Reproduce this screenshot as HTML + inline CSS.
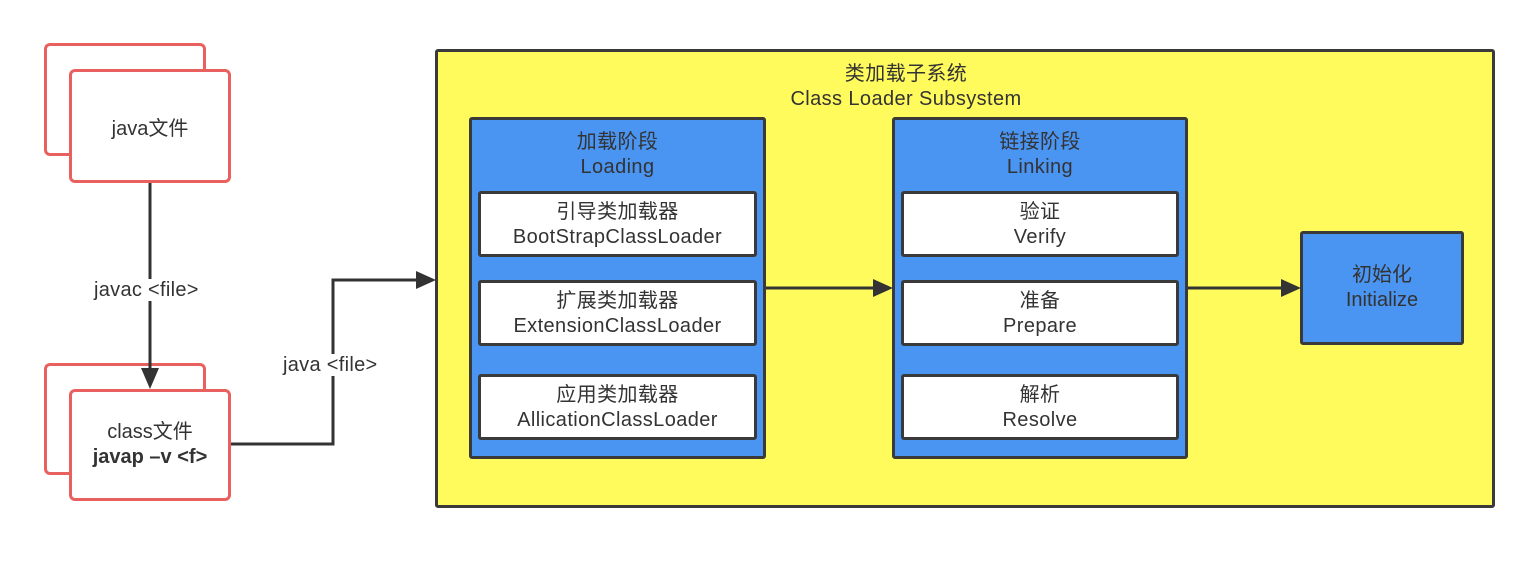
<!DOCTYPE html>
<html><head><meta charset="utf-8"><style>
body{margin:0;width:1538px;height:580px;background:#fff;position:relative;overflow:hidden;font-family:"Liberation Sans","Noto Sans CJK SC",sans-serif;color:#333;}
.a{position:absolute;box-sizing:border-box;}
.red{border:3px solid #e8615e;border-radius:6px;background:#fff;}
.dk{border:3px solid #3a3a3a;border-radius:3px;}
.t{position:absolute;text-align:center;font-size:20px;line-height:25px;letter-spacing:0.4px;}
.w{background:#fff;display:flex;flex-direction:column;justify-content:center;align-items:center;text-align:center;font-size:20px;line-height:25px;letter-spacing:0.4px;padding-top:1px;}
.lbl{position:absolute;background:#fff;font-size:20px;line-height:22px;padding:0 2px;z-index:6;letter-spacing:0.3px;}
</style></head><body>
<div class="a red" style="left:44px;top:43px;width:162px;height:113px"></div>
<div class="a red" style="left:69px;top:69px;width:162px;height:114px;display:flex;align-items:center;justify-content:center;font-size:20px">java文件</div>
<div class="a red" style="left:44px;top:363px;width:162px;height:112px"></div>
<div class="a red" style="left:69px;top:389px;width:162px;height:112px;display:flex;flex-direction:column;align-items:center;justify-content:center;font-size:20px;line-height:25px"><div>class文件</div><div style="font-weight:bold">javap –v &lt;f&gt;</div></div>

<div class="a dk" style="left:435px;top:49px;width:1060px;height:459px;background:#fffb5c;"></div>
<div class="t" style="left:436px;width:940px;top:62px">类加载子系统<br>Class Loader Subsystem</div>

<div class="a dk" style="left:469px;top:117px;width:297px;height:342px;background:#4a94f2"></div>
<div class="t" style="left:469px;width:297px;top:130px">加载阶段<br>Loading</div>
<div class="a dk w" style="left:478px;top:191px;width:279px;height:66px">引导类加载器<br>BootStrapClassLoader</div>
<div class="a dk w" style="left:478px;top:280px;width:279px;height:66px">扩展类加载器<br>ExtensionClassLoader</div>
<div class="a dk w" style="left:478px;top:374px;width:279px;height:66px">应用类加载器<br>AllicationClassLoader</div>

<div class="a dk" style="left:892px;top:117px;width:296px;height:342px;background:#4a94f2"></div>
<div class="t" style="left:892px;width:296px;top:130px">链接阶段<br>Linking</div>
<div class="a dk w" style="left:901px;top:191px;width:278px;height:66px">验证<br>Verify</div>
<div class="a dk w" style="left:901px;top:280px;width:278px;height:66px">准备<br>Prepare</div>
<div class="a dk w" style="left:901px;top:374px;width:278px;height:66px">解析<br>Resolve</div>

<div class="a dk" style="left:1300px;top:231px;width:164px;height:114px;background:#4a94f2;display:flex;align-items:center;justify-content:center;text-align:center;font-size:20px;line-height:25px">初始化<br>Initialize</div>

<svg class="a" style="left:0;top:0;z-index:5" width="1538" height="580">
<g stroke="#333" stroke-width="3" fill="none">
<line x1="150" y1="183" x2="150" y2="370"/>
<polyline points="231,444 333,444 333,280 418,280"/>
<line x1="766" y1="288" x2="875" y2="288"/>
<line x1="1188" y1="288" x2="1283" y2="288"/>
</g>
<g fill="#333">
<polygon points="141,368 159,368 150,389"/>
<polygon points="416,271 416,289 436,280"/>
<polygon points="873,279 873,297 893,288"/>
<polygon points="1281,279 1281,297 1301,288"/>
</g>
</svg>
<div class="lbl" style="left:92px;top:279px">javac &lt;file&gt;</div>
<div class="lbl" style="left:281px;top:354px">java &lt;file&gt;</div>
</body></html>
